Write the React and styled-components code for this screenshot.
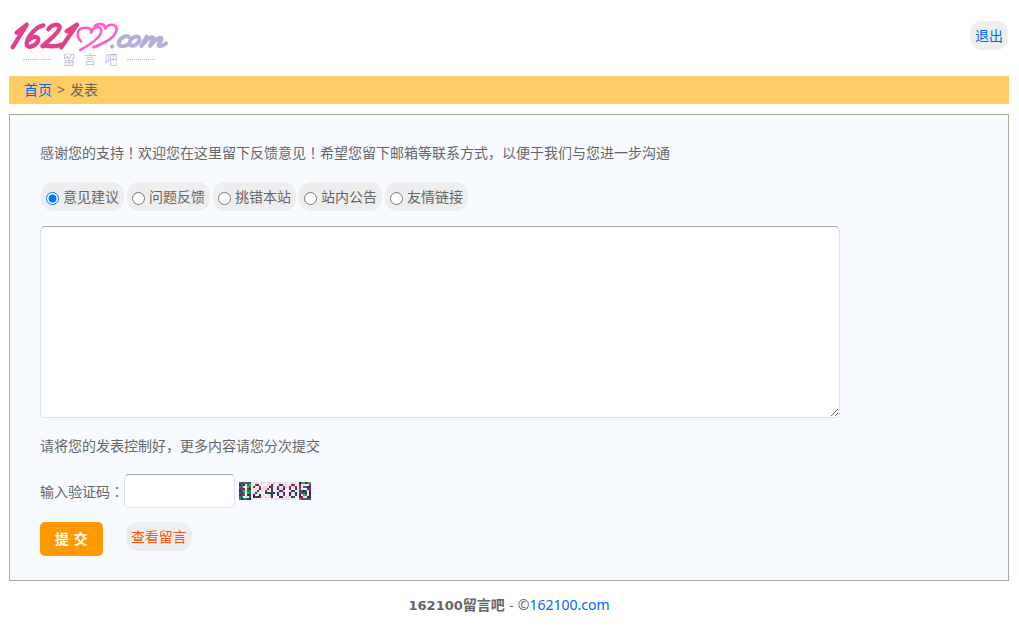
import React, { useState } from "react";
import styled, { createGlobalStyle } from "styled-components";

const GlobalStyle = createGlobalStyle`
  *, *::before, *::after { box-sizing: border-box; }
  body {
    margin: 0;
    background: #fff;
    color: #666;
    font-family: "Noto Sans", "Noto Sans CJK SC", sans-serif;
    font-size: 14px;
    line-height: 28px;
  }
`;

const Page = styled.div`
  padding: 0 10px 0 9px;
`;

const Header = styled.header`
  display: flex;
  justify-content: space-between;
  align-items: flex-start;
  height: 76px;
  padding: 21px 1px 0 0;
`;

const Logo = styled.a`
  display: flex;
  flex-direction: column;
  width: 160px;
  text-decoration: none;
  color: #a9a4cc;
`;

const Wordmark = styled.svg`
  display: block;
  width: 160px;
  height: 32px;
  fill: none;
  stroke-linecap: round;
  stroke-linejoin: round;
`;

const Tagline = styled.span`
  display: flex;
  align-items: center;
  gap: 8px;
  margin: 0 14px;
  font-size: 13px;
  font-weight: 300;
  line-height: 12px;

  &::before, &::after {
    content: "";
    flex: 1;
    border-top: 1px dotted #b5b0d8;
  }
  &::before { margin-right: 3px; }
  &::after { margin-left: 1px; }
`;

const Pill = styled.span`
  display: inline-flex;
  align-items: center;
  height: 29px;
  padding: 0 5px;
  border-radius: 12px;
  background: #eee;
`;

const PillLink = styled(Pill).attrs({ as: "a" })`
  color: ${(p) => p.$color};
  text-decoration: none;
`;

const TextLink = styled.a`
  color: #06f;
  text-decoration: none;
`;

const Breadcrumb = styled.nav`
  display: flex;
  gap: 5px;
  height: 28px;
  padding: 0 15px;
  background: #fc6;
`;

const Panel = styled.form`
  margin-top: 10px;
  padding: 23px 30px 24px;
  border: 1px solid #aa9;
  background: #f7fbff;
`;

const Line = styled.p`
  margin: 0;
`;

const Mark = styled.span`
  font-family: "Noto Sans CJK TC", sans-serif;
`;

const Topics = styled.fieldset`
  display: flex;
  flex-wrap: wrap;
  gap: 3px;
  margin: 15px 0;
  padding: 0 1px;
  border: 0;
`;

const Topic = styled(Pill).attrs({ as: "label" })``;

const Radio = styled.input.attrs({ type: "radio" })`
  width: 13px;
  height: 13px;
  margin: 3px 4px 0 0;
`;

const fieldBox = `
  border: 1px solid #dde1e8;
  border-top-color: #aaa;
  border-radius: 5px;
  background: #fff;
  color: #666;
  font: inherit;
  padding: 4px 8px;
`;

const Message = styled.textarea`
  ${fieldBox}
  display: block;
  width: 100%;
  max-width: 800px;
  height: 192px;
  margin-bottom: 14px;
  resize: both;
`;

const CodeRow = styled.div`
  display: flex;
  align-items: center;
  margin-top: 14px;
`;

const CodeInput = styled.input`
  ${fieldBox}
  width: 111px;
  height: 34px;
  margin-right: 4px;
`;

const Captcha = styled.svg`
  display: block;
  width: 72px;
  height: 18px;
`;

const Actions = styled.div`
  display: flex;
  align-items: flex-start;
  gap: 23px;
  margin-top: 14px;
`;

const Submit = styled.button`
  height: 34px;
  padding: 0 15px;
  border: 0;
  border-radius: 5px;
  background: #f90;
  color: #fff;
  font: inherit;
  font-family: "DejaVu Sans", "Noto Sans CJK SC", sans-serif;
  font-weight: 700;
  cursor: pointer;
`;

const Footer = styled.footer`
  padding: 10px 0;
  text-align: center;
`;

const Wide = styled.span`
  font-family: "DejaVu Sans", sans-serif;
  font-size: 13px;
`;

const topics = ["意见建议", "问题反馈", "挑错本站", "站内公告", "友情链接"];

const digitRows = {
  1: ["..#..", ".##..", "..#..", "..#..", "..#..", "..#..", ".###."],
  2: [".##..", "#..#.", "...#.", "..#..", ".#...", "#..#.", "####."],
  4: ["...#.", "..##.", ".#.#.", "#..#.", "#####", "...#.", "...#."],
  5: ["####.", "#....", "###..", "...#.", "...#.", "#..#.", ".##.."],
  8: [".##..", "#..#.", "#..#.", ".##..", "#..#.", "#..#.", ".##.."],
};
const pale = ["#f4d8ea", "#dff2dc", "#f7f0e4", "#e6e0f6", "#ffffff", "#f8cfe0", "#e4f8f0"];
const vivid = ["#208040", "#203060", "#a02060", "#309050", "#108070", "#502080", "#60a050"];
const ink = ["#702050", "#303080", "#402060", "#903060", "#205060"];

function CaptchaImage() {
  const cells = [];
  for (let y = 0; y < 9; y++) {
    for (let x = 0; x < 36; x++) {
      const slot = Math.floor(x / 6);
      const inverse = slot === 0 || slot === 5;
      const row = digitRows["124885"[slot]][y - 1] || "";
      const on = row[(x % 6) - 1] === "#";
      const n = (x * 37 + y * 61 + x * y * 13) % 97;
      let set = on ? ink : pale;
      if (inverse) set = on ? pale : vivid;
      cells.push(<rect key={`${x}-${y}`} x={x} y={y} width="1" height="1" fill={set[n % set.length]} />);
    }
  }
  return (
    <Captcha viewBox="0 0 36 9" shapeRendering="crispEdges" role="img" aria-label="验证码">
      {cells}
    </Captcha>
  );
}

export default function App() {
  const [topic, setTopic] = useState(topics[0]);
  return (
    <Page>
      <GlobalStyle />
      <Header>
        <Logo href="#">
          <Wordmark viewBox="27 33 480 96" aria-hidden="true">
            <g stroke="#e0408c" strokeWidth="13">
              <path d="M50 68L80 44L38 112" />
              <path d="M130 46C104 52 82 82 80 100C79 116 102 112 113 96C122 80 102 74 86 90" />
              <path d="M145 58C158 40 184 40 178 56C172 74 148 88 127 109C144 102 160 116 184 104" />
              <path d="M200 64L231 44L184 112" />
            </g>
            <g stroke="#ff5ccc" strokeWidth="8">
              <path d="M243 94C230 82 228 58 250 54C266 51 274 56 274 68C278 52 300 44 304 60C306 80 270 104 241 120" />
              <path d="M284 48C300 38 314 40 316 56C322 42 350 38 350 58C348 84 312 98 280 112" />
            </g>
            <g stroke="#b5b0d8" strokeWidth="12">
              <path d="M336 110L337 109" />
              <path d="M386 80C374 74 356 88 356 100C358 114 376 108 388 102" />
              <path d="M408 80C392 82 384 98 392 106C404 112 426 92 416 82Q412 78 408 80" />
              <path d="M440 80L424 108C436 94 450 80 458 82C466 84 452 98 450 108C464 92 476 80 484 84C488 90 470 104 478 108C486 110 492 104 498 100" />
            </g>
          </Wordmark>
          <Tagline>
            <span>留</span>
            <span>言</span>
            <span>吧</span>
          </Tagline>
        </Logo>
        <PillLink href="#" $color="#06f">退出</PillLink>
      </Header>

      <Breadcrumb>
        <TextLink href="#">首页</TextLink>
        <span>&gt;</span>
        <span>发表</span>
      </Breadcrumb>

      <Panel onSubmit={(e) => e.preventDefault()}>
        <Line>
          感谢您的支持<Mark>！</Mark>欢迎您在这里留下反馈意见<Mark>！</Mark>希望您留下邮箱等联系方式，以便于我们与您进一步沟通
        </Line>
        <Topics>
          {topics.map((t) => (
            <Topic key={t}>
              <Radio name="topic" checked={topic === t} onChange={() => setTopic(t)} />
              {t}
            </Topic>
          ))}
        </Topics>
        <Message aria-label="留言内容" />
        <Line>请将您的发表控制好，更多内容请您分次提交</Line>
        <CodeRow>
          <label htmlFor="code">输入验证码<Mark>：</Mark></label>
          <CodeInput id="code" />
          <CaptchaImage />
        </CodeRow>
        <Actions>
          <Submit type="submit">提 交</Submit>
          <PillLink href="#" $color="#f50">查看留言</PillLink>
        </Actions>
      </Panel>

      <Footer>
        <strong><Wide>162100</Wide>留言吧</strong>
        <Wide> - </Wide>©<TextLink href="#">162100.com</TextLink>
      </Footer>
    </Page>
  );
}
